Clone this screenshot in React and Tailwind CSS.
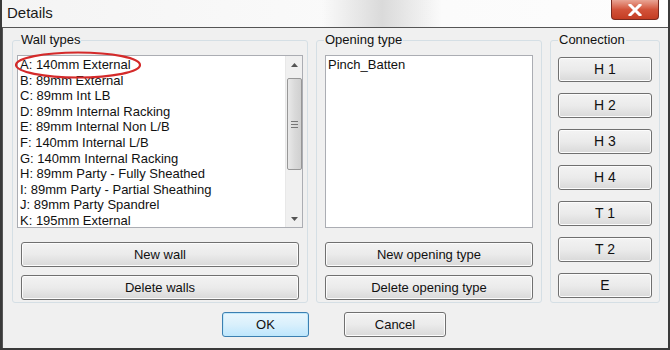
import React from 'react'

const walls = [
  'A: 140mm External',
  'B: 89mm External',
  'C: 89mm Int LB',
  'D: 89mm Internal Racking',
  'E: 89mm Internal Non L/B',
  'F: 140mm Internal L/B',
  'G: 140mm Internal Racking',
  'H: 89mm Party - Fully Sheathed',
  'I: 89mm Party - Partial Sheathing',
  'J: 89mm Party Spandrel',
  'K: 195mm External',
]

const connections = ['H 1', 'H 2', 'H 3', 'H 4', 'T 1', 'T 2', 'E']

function Btn({ children, className = '' }) {
  return (
    <div
      className={
        'flex items-center justify-center h-[25px] rounded-[3px] border border-[#707070] bg-gradient-to-b from-[#f3f3f3] via-[#ebebeb] to-[#d9d9d9] text-[13px] text-[#111] shadow-[inset_0_0_0_1px_#fcfcfc] ' +
        className
      }
    >
      {children}
    </div>
  )
}

function Group({ label, className = '', children }) {
  return (
    <div className={'relative border border-[#d5dfe5] rounded-[3px] ' + className}>
      <span className="absolute -top-[10px] left-[7px] bg-[#f0f0f0] px-[1px] text-[13px] leading-[18px] text-[#111]">
        {label}
      </span>
      {children}
    </div>
  )
}

export default function App() {
  return (
    <div
      className="w-[670px] h-[350px] flex flex-col bg-[#f0f0f0] border-2 border-[#3a3a3a] border-t-0 overflow-hidden"
      style={{ fontFamily: '"Liberation Sans", Arial, sans-serif' }}
    >
      {/* title bar */}
      <div className="relative h-[27px] shrink-0 flex items-center bg-gradient-to-r from-[#f4f4f4] via-[#fafafa] to-[#fdfdfd]">
        <div className="absolute inset-y-0 left-[320px] w-[120px] bg-gradient-to-r from-transparent via-[#dadada] to-transparent" />
        <span className="relative pl-[5px] text-[15px] text-[#1a1a1a]">Details</span>
        <div className="absolute right-[9px] top-0 w-[48px] h-[20px] rounded-b-[4px] border border-[#7a2a1e] border-t-0 bg-gradient-to-b from-[#e8a494] via-[#d2533a] to-[#c43c22] flex items-center justify-center">
          <svg width="14" height="12" viewBox="0 0 14 12">
            <path d="M2 1 L12 11 M12 1 L2 11" stroke="#ffffff" strokeWidth="3" strokeLinecap="square" />
          </svg>
        </div>
      </div>

      {/* client */}
      <div className="flex-1 flex flex-col border-t border-l border-[#555] pt-[12px] pl-[9px] pr-[6px]">
        <div className="flex gap-[8px] h-[263px]">
          <Group label="Wall types" className="w-[296px] pt-[14px] px-[4px] flex flex-col">
            <div className="relative h-[173px] flex border border-[#abadb3] bg-white">
              <div className="flex-1 pl-[2px] pt-[1px] text-[13px] leading-[15.6px] text-[#111]">
                {walls.map((w) => (
                  <div key={w} className="whitespace-nowrap">{w}</div>
                ))}
              </div>
              <div className="w-[17px] flex flex-col items-center bg-[#f0f0f0] border-l border-[#e8e8e8]">
                <div className="h-[17px] flex items-center justify-center">
                  <svg width="7" height="4" viewBox="0 0 7 4"><path d="M0 4 L3.5 0 L7 4 Z" fill="#555" /></svg>
                </div>
                <div className="mt-[5px] w-[15px] h-[92px] rounded-[2px] border border-[#979797] bg-gradient-to-r from-[#e9e9e9] via-[#dadada] to-[#d0d0d0] flex flex-col items-center justify-center gap-[2px]">
                  <div className="w-[7px] h-[1px] bg-[#777]" />
                  <div className="w-[7px] h-[1px] bg-[#777]" />
                  <div className="w-[7px] h-[1px] bg-[#777]" />
                </div>
                <div className="flex-1" />
                <div className="h-[17px] flex items-center justify-center">
                  <svg width="7" height="4" viewBox="0 0 7 4"><path d="M0 0 L3.5 4 L7 0 Z" fill="#555" /></svg>
                </div>
              </div>
              <svg className="absolute -left-[3px] -top-[5px] pointer-events-none" width="130" height="30" viewBox="0 0 130 30">
                <ellipse cx="63" cy="14" rx="62" ry="12.5" fill="none" stroke="#d42a2a" strokeWidth="2.2" />
              </svg>
            </div>
            <div className="flex flex-col gap-[8px] mt-[14px] px-[4px]">
              <Btn>New wall</Btn>
              <Btn>Delete walls</Btn>
            </div>
          </Group>

          <Group label="Opening type" className="w-[226px] pt-[14px] px-[8px] flex flex-col">
            <div className="h-[173px] border border-[#abadb3] bg-white pl-[2px] pt-[1px] text-[13px] leading-[15.6px] text-[#111]">
              Pinch_Batten
            </div>
            <div className="flex flex-col gap-[8px] mt-[14px]">
              <Btn>New opening type</Btn>
              <Btn>Delete opening type</Btn>
            </div>
          </Group>

          <Group label="Connection" className="w-[110px] pt-[16px] px-[7px] flex flex-col gap-[11px]">
            {connections.map((c) => (
              <Btn key={c} className="text-[14px]">{c}</Btn>
            ))}
          </Group>
        </div>

        <div className="flex justify-center gap-[35px] mt-[9px] pr-[6px]">
          <div className="w-[87px] h-[25px] flex items-center justify-center rounded-[3px] border border-[#3c7fb1] bg-gradient-to-b from-[#eaf6fd] via-[#d9f0fc] to-[#bee6fd] text-[13px] text-[#111] shadow-[inset_0_0_0_1px_#bfe8fb]">
            OK
          </div>
          <Btn className="w-[102px]">Cancel</Btn>
        </div>
      </div>
    </div>
  )
}
